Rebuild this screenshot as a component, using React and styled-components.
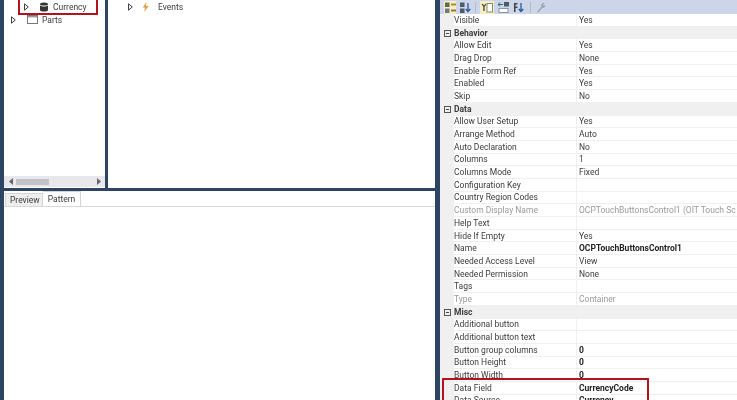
import React from "react";
import styled, { createGlobalStyle } from "styled-components";

const Global = createGlobalStyle`
  html, body { margin: 0; padding: 0; background: #2d4563; }
  body { width: 737px; height: 400px; overflow: hidden; font-family: Roboto, "Liberation Sans", sans-serif; }
`;
const Page = styled.div`
  width: 737px; height: 400px; overflow: hidden; display: flex; background: #2d4563; position: relative;
  color: #3c3c3c; font-size: 8.5px; filter: blur(0.45px);
`;
const LeftArea = styled.div`
  width: 431px; margin-left: 4px; display: flex; flex-direction: column; gap: 3px; flex-shrink: 0;
`;
const TopRow = styled.div`display: flex; height: 188px; gap: 3px; flex-shrink: 0;`;
const TreePane = styled.div`
  width: 101px; background: #fff; display: flex; flex-direction: column;
`;
const TreeBody = styled.div`flex: 1; padding-left: 7px;`;
const TreeRow = styled.div`
  display: flex; align-items: center; height: 13px; padding-left: ${p => p.$indent || 0}px;
`;
const TreeIcon = styled.span`display: flex; margin-left: ${p => p.$gap}px;`;
const TreeText = styled.span`margin-left: ${p => p.$gap}px;`;
const Scroll = styled.div`
  height: 11px; background: #e8e8ec; display: flex; align-items: center; justify-content: space-between;
  padding: 0 4px 0 5px; margin-bottom: 1px;
`;
const Thumb = styled.div`width: 33px; height: 6px; background: #c2c3c9; margin-left: 3px; margin-right: auto;`;
const Events = styled.div`flex: 1; background: #fff; padding-left: 20px;`;
const Bottom = styled.div`flex: 1; background: #fff; display: flex; flex-direction: column;`;
const Tabs = styled.div`
  height: 15px; display: flex; align-items: flex-end; border-bottom: 1px solid #d8d8d8; padding-left: 1px; flex-shrink: 0;
`;
const Tab = styled.div`
  box-sizing: border-box; height: ${p => p.$active ? 15 : 13}px;
  padding: ${p => p.$active ? "0 5px 0 5px" : "0 2px 0 4px"}; display: flex; align-items: center;
  background: ${p => p.$active ? "#fff" : "#eeeeee"};
  border: 1px solid #d4d4d4; border-bottom: none;
  ${p => p.$active ? "border-left: none;" : ""}
`;
const Props = styled.div`width: 297px; margin-left: 5px; background: #fff; display: flex; flex-direction: column;`;
const Toolbar = styled.div`
  height: 14px; background: #ccd6e8; display: flex; align-items: center; padding-left: 4px; gap: 4px; flex-shrink: 0;
`;
const ToolIcon = styled.div`
  width: ${p => p.$w || 11}px; height: 13px; display: flex; align-items: center; justify-content: center;
  background: ${p => p.$on ? "#f6eec4" : "transparent"};
`;
const ToolSep = styled.div`width: 1px; height: 11px; background: #b0bacd; margin-left: ${p => p.$ml || 0}px;`;
const Row = styled.div`
  height: 12.7px; display: grid; grid-template-columns: 14px 122px 1fr; align-items: center;
  box-sizing: border-box; border-bottom: 1px solid #efeff2; flex-shrink: 0;
  background: ${p => p.$cat ? "#f0f0f0" : "#fff"};
  font-weight: ${p => p.$cat ? 700 : 400};
  color: ${p => p.$dim ? "#9a9a9a" : "#3c3c3c"};
`;
const Gutter = styled.div`
  align-self: stretch; background: #f0f0f0; display: flex; align-items: center; justify-content: center;
  margin-bottom: -1px;
`;
const Label = styled.div`white-space: nowrap; overflow: hidden;`;
const Value = styled.div`
  align-self: stretch; display: flex; align-items: center; padding-left: 2px; white-space: nowrap; overflow: hidden;
  border-left: 1px solid ${p => p.$cat ? "transparent" : "#efeff2"};
  font-weight: ${p => p.$bold ? 700 : "inherit"}; color: ${p => p.$bold ? "#222" : "inherit"};
`;
const Mark = styled.div`
  position: absolute; border: 2px solid #b3121f; box-sizing: border-box; pointer-events: none;
  left: ${p => p.$l}px; top: ${p => p.$t}px; width: ${p => p.$w}px; height: ${p => p.$h}px;
`;
const Minus = styled.span`
  width: 7px; height: 7px; border: 1px solid #555; box-sizing: border-box; position: relative; display: block;
  &::after { content: ""; position: absolute; left: 1px; right: 1px; top: 2px; height: 1px; background: #444; }
`;

const Caret = () => (
  <svg width="5" height="8" viewBox="0 0 5 8"><path d="M.5.8 4.3 4 .5 7.2Z" fill="#f4f4f4" stroke="#444" /></svg>
);
const Db = () => (
  <svg width="10" height="10" viewBox="0 0 10 10">
    <ellipse cx="5" cy="2" rx="4" ry="1.6" fill="#333" />
    <path d="M1 3.2V8c0 1 1.8 1.6 4 1.6S9 9 9 8V3.2C8 4.3 6.5 4.6 5 4.6S2 4.3 1 3.2Z" fill="#333" />
  </svg>
);
const Win = () => (
  <svg width="11" height="9" viewBox="0 0 11 9"><rect x=".5" y=".5" width="10" height="8" fill="#fff" stroke="#777" /><rect x="1" y="1" width="9" height="1.4" fill="#999" /></svg>
);
const Bolt = () => (
  <svg width="7" height="10" viewBox="0 0 7 10"><path d="M4.5 0 .8 5.5h2.4L2 10l4.5-6H3.9Z" fill="#e39a3c" /></svg>
);
const Arrow = ({ left }) => (
  <svg width="4" height="7" viewBox="0 0 4 7"><path d={left ? "M4 0 0 3.5 4 7Z" : "M0 0 4 3.5 0 7Z"} fill="#666" /></svg>
);
const Categorized = () => (
  <svg width="11" height="11" viewBox="0 0 11 11"><path d="M0 .5h4.5V5H0Z" fill="#5c6b4a" /><path d="M6 1.5h5v2H6Z" fill="#b08a3a" /><path d="M0 6.5h4.5V11H0Z" fill="#6d7a8a" /><path d="M6 7.5h5v2H6Z" fill="#8d7a3a" /></svg>
);
const AZ = () => (
  <svg width="11" height="11" viewBox="0 0 11 11"><path d="M0 .5h4.5V5H0ZM0 6.5h4.5V11H0Z" fill="#4d5a6a" /><path d="M8 1v8M5.7 7 8 9.5 10.3 7" stroke="#2b5a9a" strokeWidth="1.3" fill="none" /></svg>
);
const Tool3 = () => (
  <svg width="12" height="11" viewBox="0 0 12 11"><path d="M1 2l2 2.5V9M5 2 3 4.5" stroke="#333" strokeWidth="1.2" fill="none" /><rect x="6" y="1.5" width="5.5" height="8.5" fill="#fff" stroke="#8a8a6a" /></svg>
);
const Tool4 = () => (
  <svg width="11" height="11" viewBox="0 0 11 11"><path d="M0 2.5h5M2 .5 0 2.5l2 2" stroke="#2b6a7a" fill="none" /><rect x="6" y="0" width="5" height="4.5" fill="#4a5a6a" /><rect x="1" y="6.5" width="9" height="4" fill="#fff" stroke="#8a94a4" /></svg>
);
const Tool5 = () => (
  <svg width="11" height="11" viewBox="0 0 11 11"><path d="M1 1h3.5v1.5H2.5V4.5H4.5V6H2.5V10H1Z" fill="#444" /><path d="M8 1v8M5.7 7 8 9.5 10.3 7" stroke="#2b5a9a" strokeWidth="1.3" fill="none" /></svg>
);
const Wrench = () => (
  <svg width="10" height="11" viewBox="0 0 10 11"><path d="M1 10 5.5 4.5a2.4 2.4 0 0 1 3-3.3L7 3l.6 1 1.6-1a2.4 2.4 0 0 1-3 2.7L2.2 10.6Z" fill="#9aa0aa" /></svg>
);

const rows = [
  ["Visible", "Yes"],
  ["Behavior", null, "cat"],
  ["Allow Edit", "Yes"],
  ["Drag Drop", "None"],
  ["Enable Form Ref", "Yes"],
  ["Enabled", "Yes"],
  ["Skip", "No"],
  ["Data", null, "cat"],
  ["Allow User Setup", "Yes"],
  ["Arrange Method", "Auto"],
  ["Auto Declaration", "No"],
  ["Columns", "1"],
  ["Columns Mode", "Fixed"],
  ["Configuration Key", ""],
  ["Country Region Codes", ""],
  ["Custom Display Name", "OCPTouchButtonsControl1 (OIT Touch Sc", "dim"],
  ["Help Text", ""],
  ["Hide If Empty", "Yes"],
  ["Name", "OCPTouchButtonsControl1", "bold"],
  ["Needed Access Level", "View"],
  ["Needed Permission", "None"],
  ["Tags", ""],
  ["Type", "Container", "dim"],
  ["Misc", null, "cat"],
  ["Additional button", ""],
  ["Additional button text", ""],
  ["Button group columns", "0", "bold"],
  ["Button Height", "0", "bold"],
  ["Button Width", "0", "bold"],
  ["Data Field", "CurrencyCode", "bold"],
  ["Data Source", "Currency", "bold"],
];

export default function App() {
  return (
    <Page>
      <Global />
      <LeftArea>
        <TopRow>
          <TreePane>
            <TreeBody>
              <TreeRow $indent={13}><Caret /><TreeIcon $gap={10}><Db /></TreeIcon><TreeText $gap={4}>Currency</TreeText></TreeRow>
              <TreeRow><Caret /><TreeIcon $gap={11}><Win /></TreeIcon><TreeText $gap={4}>Parts</TreeText></TreeRow>
            </TreeBody>
            <Scroll><Arrow left /><Thumb /><Arrow /></Scroll>
          </TreePane>
          <Events>
            <TreeRow><Caret /><TreeIcon $gap={9}><Bolt /></TreeIcon><TreeText $gap={9}>Events</TreeText></TreeRow>
          </Events>
        </TopRow>
        <Bottom>
          <Tabs>
            <Tab>Preview</Tab>
            <Tab $active>Pattern</Tab>
          </Tabs>
        </Bottom>
      </LeftArea>
      <Props>
        <Toolbar>
          <ToolIcon $on $w={12}><Categorized /></ToolIcon>
          <ToolIcon><AZ /></ToolIcon>
          <ToolSep />
          <ToolIcon $on $w={14}><Tool3 /></ToolIcon>
          <ToolIcon><Tool4 /></ToolIcon>
          <ToolIcon><Tool5 /></ToolIcon>
          <ToolSep $ml={2} />
          <ToolIcon><Wrench /></ToolIcon>
        </Toolbar>
        {rows.map(([label, value, kind]) => (
          <Row key={label} $cat={kind === "cat"} $dim={kind === "dim"}>
            <Gutter>{kind === "cat" && <Minus />}</Gutter>
            <Label>{label}</Label>
            <Value $cat={kind === "cat"} $bold={kind === "bold"}>{value}</Value>
          </Row>
        ))}
      </Props>
      <Mark $l={18} $t={-3} $w={80} $h={18} />
      <Mark $l={442} $t={378} $w={207} $h={30} />
    </Page>
  );
}
